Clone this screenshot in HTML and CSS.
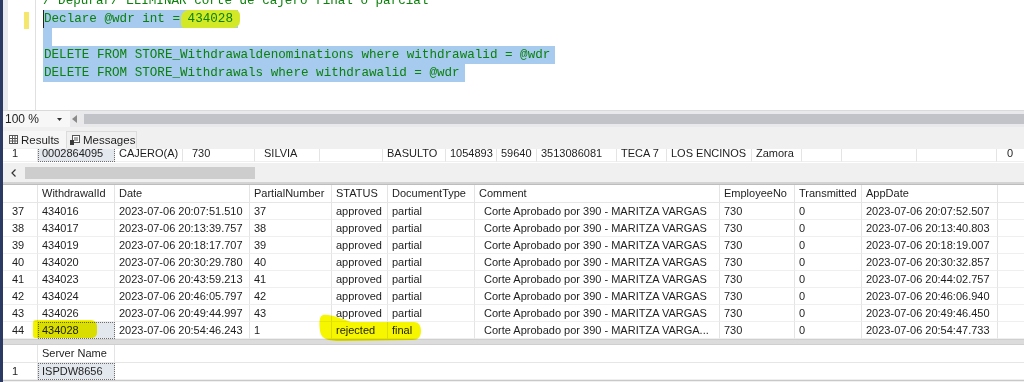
FILE: index.html
```html
<!DOCTYPE html>
<html lang="es">
<head>
  <meta charset="UTF-8">
  <meta name="viewport" content="width=device-width, initial-scale=1.0">
  <title>Depurar corte de cajero</title>
  <link rel="stylesheet" href="styles.css">
</head>
<body>
  <div class="editor">
    <div class="sel-margin"></div>
    <div class="gutter"><span class="change-mark"></span></div>
    <div class="code">
      <div class="line">/ Depurar/ ELIMINAR corte de cajero final o parcial</div>
      <div class="line"><span class="sel caret">Declare @wdr int = <span class="marker">434028</span></span></div>
      <div class="line"><span class="sel empty"></span></div>
      <div class="line"><span class="sel">DELETE FROM STORE_Withdrawaldenominations where withdrawalid = @wdr</span></div>
      <div class="line"><span class="sel">DELETE FROM STORE_Withdrawals where withdrawalid = @wdr</span></div>
    </div>
  </div>

  <div class="zoombar">
    <div class="zoom-combo">
      <span>100 %</span>
      <svg class="combo-arrow" width="5" height="3" viewBox="0 0 5 3"><polygon points="0,0 5,0 2.5,3" fill="#333"/></svg>
    </div>
    <div class="hscroll">
      <svg class="scroll-left" width="5" height="8" viewBox="0 0 5 8"><polygon points="5,0 5,8 0,4" fill="#8a8a8a"/></svg>
      <div class="hscroll-thumb"></div>
    </div>
  </div>

  <div class="tabs">
    <div class="tab tab-results">
      <svg width="9" height="9" viewBox="0 0 9 9"><rect x="0.5" y="0.5" width="8" height="8" fill="#fff" stroke="#555"/><path d="M0.5 3.5H8.5M0.5 6H8.5M3.5 0.5V8.5M6 0.5V8.5" stroke="#555"/></svg>
      Results
    </div>
    <div class="tab tab-messages">
      <svg width="10" height="10" viewBox="0 0 10 10"><rect x="2.5" y="0.5" width="7" height="7" fill="#fff" stroke="#555"/><path d="M4 3H8M4 5H8" stroke="#555"/><rect x="0" y="5" width="4" height="5" fill="#3a3a3a"/></svg>
      Messages
    </div>
  </div>

  <div class="results">
    <div class="grid1-view">
      <table class="grid grid1">
        <colgroup>
          <col style="width:35px"><col style="width:77px"><col style="width:68px"><col style="width:72px">
          <col style="width:65px"><col style="width:63px"><col style="width:63px"><col style="width:51px">
          <col style="width:40px"><col style="width:80px"><col style="width:50px"><col style="width:85px">
          <col style="width:50px"><col style="width:40px"><col style="width:75px"><col style="width:80px">
          <col style="width:27px">
        </colgroup>
        <tr>
          <td class="rh">1</td>
          <td class="focus">0002864095</td>
          <td>CAJERO(A)</td>
          <td class="pad9">730</td>
          <td class="pad9">SILVIA</td>
          <td></td>
          <td>BASULTO</td>
          <td>1054893</td>
          <td>59640</td>
          <td>3513086081</td>
          <td>TECA 7</td>
          <td>LOS ENCINOS</td>
          <td>Zamora</td>
          <td></td>
          <td></td>
          <td></td>
          <td class="last pad10">0</td>
        </tr>
      </table>
    </div>
    <div class="grid-scroll">
      <svg class="chevron" width="5" height="8" viewBox="0 0 5 8"><polyline points="4.5,0.5 1,4 4.5,7.5" fill="none" stroke="#333" stroke-width="1.2"/></svg>
      <div class="grid-scroll-thumb"></div>
    </div>
    <div class="divider"></div>

    <div class="grid2-wrap">
      <table class="grid grid2">
        <colgroup>
          <col style="width:35px"><col style="width:77px"><col style="width:135px"><col style="width:82px">
          <col style="width:56px"><col style="width:87px"><col style="width:245px"><col style="width:75px">
          <col style="width:67px"><col style="width:136px"><col style="width:26px">
        </colgroup>
        <tr>
          <th></th><th>WithdrawalId</th><th>Date</th><th>PartialNumber</th><th>STATUS</th>
          <th>DocumentType</th><th>Comment</th><th>EmployeeNo</th><th>Transmitted</th><th>AppDate</th><th class="last"></th>
        </tr>
        <tr>
          <td class="rh">37</td><td>434016</td><td>2023-07-06 20:07:51.510</td><td>37</td><td>approved</td>
          <td>partial</td><td class="comment">Corte Aprobado por 390 - MARITZA VARGAS</td><td>730</td><td>0</td><td>2023-07-06 20:07:52.507</td><td class="last"></td>
        </tr>
        <tr>
          <td class="rh">38</td><td>434017</td><td>2023-07-06 20:13:39.757</td><td>38</td><td>approved</td>
          <td>partial</td><td class="comment">Corte Aprobado por 390 - MARITZA VARGAS</td><td>730</td><td>0</td><td>2023-07-06 20:13:40.803</td><td class="last"></td>
        </tr>
        <tr>
          <td class="rh">39</td><td>434019</td><td>2023-07-06 20:18:17.707</td><td>39</td><td>approved</td>
          <td>partial</td><td class="comment">Corte Aprobado por 390 - MARITZA VARGAS</td><td>730</td><td>0</td><td>2023-07-06 20:18:19.007</td><td class="last"></td>
        </tr>
        <tr>
          <td class="rh">40</td><td>434020</td><td>2023-07-06 20:30:29.780</td><td>40</td><td>approved</td>
          <td>partial</td><td class="comment">Corte Aprobado por 390 - MARITZA VARGAS</td><td>730</td><td>0</td><td>2023-07-06 20:30:32.857</td><td class="last"></td>
        </tr>
        <tr>
          <td class="rh">41</td><td>434023</td><td>2023-07-06 20:43:59.213</td><td>41</td><td>approved</td>
          <td>partial</td><td class="comment">Corte Aprobado por 390 - MARITZA VARGAS</td><td>730</td><td>0</td><td>2023-07-06 20:44:02.757</td><td class="last"></td>
        </tr>
        <tr>
          <td class="rh">42</td><td>434024</td><td>2023-07-06 20:46:05.797</td><td>42</td><td>approved</td>
          <td>partial</td><td class="comment">Corte Aprobado por 390 - MARITZA VARGAS</td><td>730</td><td>0</td><td>2023-07-06 20:46:06.940</td><td class="last"></td>
        </tr>
        <tr>
          <td class="rh">43</td><td>434026</td><td>2023-07-06 20:49:44.997</td><td>43</td><td>approved</td>
          <td>partial</td><td class="comment">Corte Aprobado por 390 - MARITZA VARGAS</td><td>730</td><td>0</td><td>2023-07-06 20:49:46.450</td><td class="last"></td>
        </tr>
        <tr>
          <td class="rh">44</td><td class="focus">434028</td><td>2023-07-06 20:54:46.243</td><td>1</td><td>rejected</td>
          <td>final</td><td class="comment">Corte Aprobado por 390 - MARITZA VARGA...</td><td>730</td><td>0</td><td>2023-07-06 20:54:47.733</td><td class="last"></td>
        </tr>
      </table>
      <!-- highlighter marks drawn over the grid -->
      <div class="hl hl-id"></div>
      <svg class="hl hl-status" width="102" height="28" viewBox="0 0 102 28">
        <path d="M4,2 C12,1 22,6 32,9 L95,9 C100,9 102,13 102,18 C102,24 99,27 93,27 L22,28 C9,28 2,26 1,18 C0,10 0,3 4,2 Z" fill="#f6f600"/>
      </svg>
    </div>

    <div class="split"></div>

    <table class="grid grid3">
      <colgroup>
        <col style="width:35px"><col style="width:77px"><col style="width:909px">
      </colgroup>
      <tr><th></th><th>Server Name</th><th class="last"></th></tr>
      <tr><td class="rh">1</td><td class="focus">ISPDW8656</td><td class="last"></td></tr>
    </table>
  </div>
</body>
</html>
```

FILE: styles.css
```css
* {
  box-sizing: border-box;
}

body {
  margin: 0;
  width: 1024px;
  height: 382px;
  overflow: hidden;
  border-left: 3px solid #2a3a62;
  background-color: #f0f0f0;
  font-family: "Liberation Sans", Arial, sans-serif;
  color: #1e1e1e;
}

/* query editor */
.editor {
  display: flex;
  height: 110px;
  background-color: #fff;
  overflow: hidden;
}

.sel-margin {
  width: 5px;
  background-color: #e8e9ed;
}

.gutter {
  width: 28px;
  border-right: 1px solid #e0e0e0;
}

.change-mark {
  display: block;
  width: 5px;
  height: 17px;
  margin: 12px 0 0 16px;
  background-color: #f5e66e;
}

.code {
  margin: -8px 0 0 7px;
  font-family: "Liberation Mono", monospace;
  font-size: 12.6px;
  color: #0b800b;
}

.line {
  height: 18px;
  line-height: 18px;
  white-space: pre;
}

.sel {
  display: inline-block;
  height: 18px;
  vertical-align: top;
  background-color: #a6cbef;
  padding: 0 5px 0 1px;
}

.caret {
  box-shadow: inset 1px 0 0 #222;
}

.empty {
  width: 9px;
  padding: 0;
}

.marker {
  background-color: #d3e928;
  border-radius: 8px 5px 7px 4px;
  padding: 2px 7px;
  margin: 0 -7px;
}

/* zoom + editor scrollbar */
.zoombar {
  display: flex;
  height: 17px;
  border-top: 1px solid #dadada;
  background-color: #f0f0f0;
}

.zoom-combo {
  width: 67px;
  display: flex;
  align-items: center;
  padding-left: 2px;
  font-size: 12px;
  background-color: #f7f7f7;
}

.combo-arrow {
  margin-left: auto;
  margin-right: 8px;
}

.hscroll {
  flex: 1;
  display: flex;
  align-items: center;
  background-color: #e9e9ec;
}

.scroll-left {
  margin-left: 2px;
}

.hscroll-thumb {
  flex: 1;
  height: 10px;
  margin-left: 7px;
  background-color: #c2c3c9;
}

/* result tabs */
.tabs {
  display: flex;
  align-items: flex-end;
  height: 22px;
  padding-bottom: 1px;
  background-color: #f0f0f0;
}

.tab {
  display: flex;
  align-items: center;
  gap: 3px;
  height: 17px;
  font-size: 11.5px;
}

.tab-results {
  width: 63px;
  padding-left: 6px;
  background-color: #f6f6f6;
}

.tab-messages {
  width: 71px;
  padding-left: 3px;
  border: 1px solid #dcdcdc;
  border-bottom: none;
}

/* grids */
.results {
  background-color: #fff;
}

.grid {
  border-collapse: separate;
  border-spacing: 0;
  table-layout: fixed;
  width: 1021px;
  font-size: 11px;
  background-color: #fff;
}

.grid th,
.grid td {
  padding: 0 4px;
  white-space: nowrap;
  overflow: hidden;
  text-align: left;
  font-weight: normal;
  border-right: 1px solid #e4e4e4;
}

.grid td {
  line-height: 16px;
  border-bottom: 1px solid #efefef;
}

.grid th {
  line-height: 17px;
  border-bottom: 1px solid #e6e6e6;
}

.grid .last {
  border-right: none;
}

.grid .rh {
  padding-left: 9px;
}

.grid .focus {
  background-color: #e3e8ee;
  outline: 1px dotted #6d6d6d;
  outline-offset: -1px;
}

.grid .comment {
  padding-left: 9px;
}

.pad9 {
  padding-left: 9px !important;
}

.pad10 {
  padding-left: 10px !important;
}

.grid1-view {
  height: 14px;
  overflow: hidden;
}

.grid1 {
  margin-top: -4px;
}

.grid-scroll {
  display: flex;
  align-items: center;
  height: 19px;
  background-color: #f0f0f0;
}

.chevron {
  margin-left: 8px;
}

.grid-scroll-thumb {
  width: 230px;
  height: 12px;
  margin-left: 9px;
  background-color: #cdcdcd;
}

.divider {
  height: 3px;
  background-color: #d3d3d3;
  border-bottom: 1px solid #bdbdbd;
}

.grid2-wrap {
  position: relative;
}

.hl {
  position: absolute;
  mix-blend-mode: multiply;
}

.hl-id {
  left: 30px;
  top: 135px;
  width: 64px;
  height: 18px;
  border-radius: 3px 6px 5px 2px;
  background-color: #f4f400;
}

.hl-status {
  left: 316px;
  top: 128px;
}

.split {
  height: 6px;
  background-color: #dcdcdc;
  border-top: 1px solid #cfcfcf;
  border-bottom: 1px solid #cfcfcf;
}

.grid3 {
  border-bottom: 1px solid #c8c8c8;
}
```
